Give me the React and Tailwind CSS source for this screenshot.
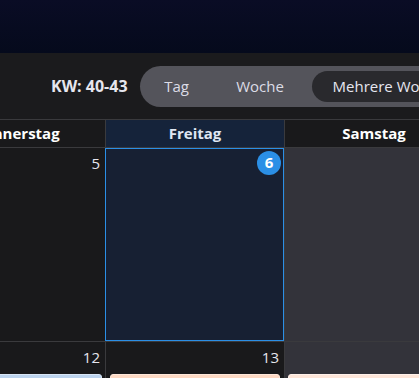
import React from 'react';

const days = ['Donnerstag', 'Freitag', 'Samstag'];

const rows = [
  [
    { num: '5' },
    { num: '6', today: true },
    { weekend: true },
  ],
  [
    { num: '12', bar: 'bg-[#bcd3ee] border-[#d9e6f6]', barCls: 'ml-0 mr-[3px]' },
    { num: '13', bar: 'bg-[#fdd8c3] border-[#fee7da]', barCls: 'ml-[4px] mr-[4px]' },
    { weekend: true, bar: 'bg-[#fde5d8] border-[#fff1ea]', barCls: 'ml-[3px] mr-0' },
  ],
];

const App = () => {
  return (
    <div className="w-[419px] h-[378px] overflow-hidden bg-[#19191b] text-[#e8e8f0] font-['Open_Sans','Noto_Sans',sans-serif]">
      {/* App top bar */}
      <div className="h-[53px] bg-gradient-to-b from-[#0a0c25] to-[#050a1c]" />

      {/* Toolbar */}
      <div className="h-[66px] bg-[#1b1b1d] flex items-center pl-[51px] whitespace-nowrap">
        <span className="text-[16px] font-bold text-[#e6e6ee]">KW: 40-43</span>
        <div className="ml-[12px] h-[41px] rounded-full bg-[#54545b] flex items-center pl-[5px] pr-[5px] shrink-0">
          <button className="w-[64px] text-center text-[15px] text-[#dcdce6]">Tag</button>
          <button className="w-[103px] text-center text-[15px] text-[#dcdce6]">Woche</button>
          <button className="h-[31px] rounded-full bg-[#29292d] px-[21px] text-[15px] text-[#e6e6f0]">
            Mehrere Wochen
          </button>
        </div>
      </div>

      {/* Calendar grid */}
      <div className="ml-[-74px] w-[600px]">
        {/* Header */}
        <div className="flex border-t border-b border-[#3a3a3d] h-[29px]">
          {days.map((d) => (
            <div
              key={d}
              className={`w-[179px] shrink-0 border-l border-[#3a3a3d] flex items-center justify-center text-[15px] font-bold ${
                d === 'Freitag' ? 'bg-[#15233a] text-[#dfe6f2]' : 'bg-[#19191b] text-white'
              }`}
            >
              {d}
            </div>
          ))}
        </div>

        {/* Week rows */}
        {rows.map((row, ri) => (
          <div key={ri} className="flex border-b border-[#3a3a3d] h-[194px]">
            {row.map((cell, ci) => (
              <div
                key={ci}
                className={`w-[179px] shrink-0 border-l flex flex-col ${
                  cell.today
                    ? 'border-[#2b8fe6] border-r border-t border-b bg-[#172033]'
                    : 'border-[#3a3a3d]'
                } ${cell.weekend ? 'bg-[#33333a]' : ''}`}
              >
                <div className="flex justify-end h-[26px] items-center pr-[5px] pt-[4px]">
                  {cell.today ? (
                    <span className="w-[24px] h-[24px] mt-[-3px] mr-[-3px] rounded-full bg-[#2b8fe6] text-white text-[15px] font-bold flex items-center justify-center">
                      {cell.num}
                    </span>
                  ) : (
                    <span className="text-[15px] text-[#e6e6ee]">{cell.num}</span>
                  )}
                </div>
                {cell.bar && (
                  <div className={`mt-[6px] h-[20px] rounded-t-[3px] border ${cell.bar} ${cell.barCls}`} />
                )}
              </div>
            ))}
          </div>
        ))}
      </div>
    </div>
  );
};

export default App;
